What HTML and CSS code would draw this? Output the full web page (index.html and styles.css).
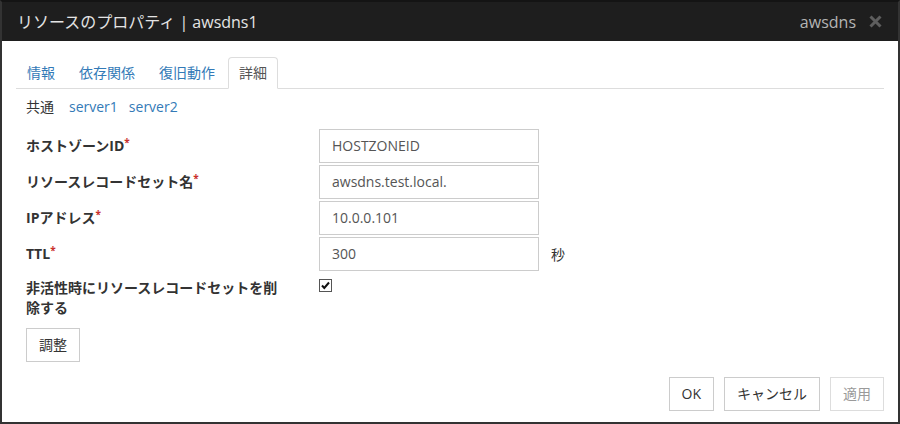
FILE: index.html
```html
<!DOCTYPE html>
<html lang="ja">
<head>
<meta charset="utf-8">
<link rel="stylesheet" href="styles.css">
</head>
<body>
<div class="dialog">
  <div class="header">
    <div class="title">リソースのプロパティ | awsdns1</div>
    <div class="header-right">
      <span class="group">awsdns</span>
      <svg class="close" width="13" height="13" viewBox="0 0 13 13"><path d="M1.5 1.5L11.5 11.5M11.5 1.5L1.5 11.5" stroke="#5e5e5e" stroke-width="3" fill="none"/></svg>
    </div>
  </div>
  <div class="body">
    <ul class="tabs">
      <li class="tab">情報</li>
      <li class="tab">依存関係</li>
      <li class="tab">復旧動作</li>
      <li class="tab active">詳細</li>
    </ul>
    <div class="subnav">
      <span class="sub current">共通</span>
      <span class="sub link s1">server1</span>
      <span class="sub link">server2</span>
    </div>
    <div class="form">
      <div class="row">
        <label class="label">ホストゾーンID<span class="req">*</span></label>
        <div class="input">HOSTZONEID</div>
      </div>
      <div class="row">
        <label class="label">リソースレコードセット名<span class="req">*</span></label>
        <div class="input">awsdns.test.local.</div>
      </div>
      <div class="row">
        <label class="label">IPアドレス<span class="req">*</span></label>
        <div class="input">10.0.0.101</div>
      </div>
      <div class="row">
        <label class="label">TTL<span class="req">*</span></label>
        <div class="input">300</div>
        <span class="unit">秒</span>
      </div>
      <div class="row check-row">
        <label class="label wrap">非活性時にリソースレコードセットを削除する</label>
        <div class="checkbox-cell">
          <svg class="checkbox" width="13" height="13" viewBox="0 0 13 13"><rect x="0.5" y="0.5" width="12" height="12" fill="#fff" stroke="#555"/><path d="M3 6.5L5.3 9L10 3.5" stroke="#111" stroke-width="2" fill="none"/></svg>
        </div>
      </div>
      <button class="btn adjust">調整</button>
    </div>
  </div>
  <div class="footer">
    <button class="btn">OK</button>
    <button class="btn">キャンセル</button>
    <button class="btn disabled">適用</button>
  </div>
</div>
</body>
</html>
```
FILE: styles.css
```css
* { box-sizing: border-box; }
html, body { margin: 0; padding: 0; background: #fff; }
body {
  font-family: "Open Sans", "Noto Sans CJK JP", sans-serif;
  font-size: 14px;
  color: #333;
}
.dialog {
  width: 900px;
  height: 424px;
  border: 2px solid #333;
  border-top-color: #141414;
  display: flex;
  flex-direction: column;
  background: #fff;
}
.header {
  height: 39px;
  flex: none;
  background: #1e1e1e;
  display: flex;
  align-items: center;
  justify-content: space-between;
  padding: 0 16px 0 15px;
}
.title {
  color: #e4e4e4;
  font-size: 16px;
  line-height: 20px;
}
.header-right {
  display: flex;
  align-items: center;
}
.group {
  color: #b4b4b4;
  font-size: 16px;
  line-height: 20px;
}
.close {
  margin-left: 13px;
  display: block;
}
.body {
  flex: 1;
  padding: 16px 14px 0;
}
.tabs {
  list-style: none;
  margin: 0;
  padding: 0;
  display: flex;
  border-bottom: 1px solid #ddd;
}
.tab {
  padding: 0 10px;
  margin-right: 2px;
  margin-bottom: -1px;
  line-height: 30px;
  border: 1px solid transparent;
  border-radius: 4px 4px 0 0;
  color: #337ab7;
}
.tab.active {
  color: #555;
  border-color: #ddd;
  border-bottom-color: #fff;
  background: #fff;
}
.subnav {
  margin-top: 8px;
  padding-left: 10px;
  line-height: 20px;
  display: flex;
}
.sub.current { margin-right: 15px; color: #333; }
.sub.link { color: #337ab7; }
.sub.s1 { margin-right: 11px; }
.form {
  margin-top: 12px;
  padding-left: 10px;
}
.row {
  display: grid;
  grid-template-columns: 293px 220px auto;
  align-items: center;
  margin-bottom: 2px;
}
.label {
  font-weight: bold;
  padding-right: 33px;
  line-height: 20px;
  color: #333;
}
.req {
  color: #c9302c;
  font-size: 10px;
  vertical-align: top;
  line-height: 12px;
}
.input {
  height: 34px;
  border: 1px solid #ccc;
  padding: 0 12px;
  line-height: 32px;
  color: #555;
}
.unit {
  padding-left: 12px;
  color: #333;
}
.check-row {
  align-items: start;
  margin-top: 7px;
}
.checkbox-cell { padding-top: 1px; }
.checkbox { display: block; }
.btn {
  font-family: "Open Sans", "Noto Sans CJK JP", sans-serif;
  font-size: 14px;
  height: 34px;
  padding: 0 12px;
  border: 1px solid #ccc;
  background: #fff;
  color: #333;
  line-height: 32px;
}
.adjust {
  margin-top: 10px;
  display: block;
}
.footer {
  display: flex;
  justify-content: flex-end;
  gap: 10px;
  padding: 0 14px 11px;
}
.btn.disabled {
  color: #9a9a9a;
  border-color: #ddd;
}
```
